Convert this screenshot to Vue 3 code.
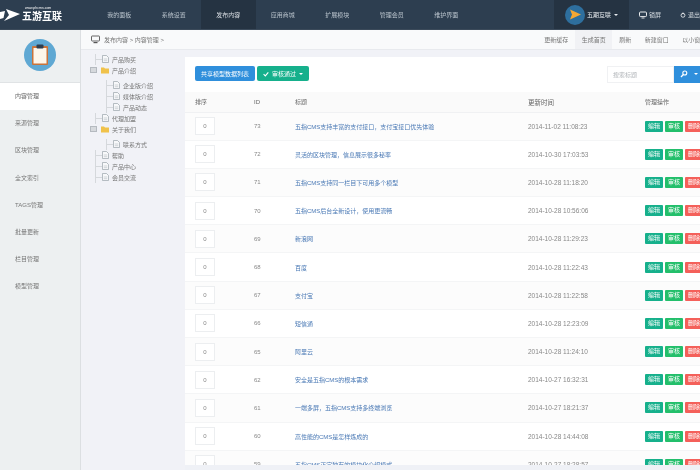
<template>
  <div class="page">
    <header class="topbar">
      <div class="logo">
        <svg width="21" height="15" viewBox="0 0 21 15">
          <path d="M0 5l5-1-1.500 7-3.500 1z" fill="#fff"/>
          <path d="M6 2l14 5-16 7 5-6z" fill="#fff"/>
        </svg>
        <div class="logo-text">
          <span class="logo-url">www.phcms.com</span>
          <span class="logo-name">五游互联</span>
        </div>
      </div>
      <nav class="nav">
        <a v-for="item in navItems" :key="item" class="nav-item" :class="{ active: item === '发布内容' }">{{ item }}</a>
      </nav>
      <div class="user">
        <span class="avatar">
          <svg width="13" height="11" viewBox="0 0 13 11">
            <path d="M1 0.500l11 5-11 5 2-5z" fill="#f5a833"/>
          </svg>
        </span>
        <span class="user-name">五期互联</span>
        <span class="caret"></span>
      </div>
      <div class="tool tool-lock">
        <svg width="8" height="8" viewBox="0 0 8 8" fill="none">
          <rect x="0.5" y="1" width="7" height="4.6" rx="1" stroke="#fff" stroke-width="0.9"/>
          <path d="M2.500 7h3" stroke="#fff" stroke-width="0.8"/>
        </svg>
        <span>锁屏</span>
      </div>
      <div class="tool tool-exit">
        <svg width="8" height="8" viewBox="0 0 8 8" fill="none">
          <circle cx="4" cy="4.400" r="2.600" stroke="#fff" stroke-width="1"/>
          <path d="M4 0.600v2.400" stroke="#fff" stroke-width="1"/>
        </svg>
        <span>退出</span>
      </div>
    </header>

    <div class="body">
      <aside class="sidebar">
        <div class="side-head">
          <span class="side-icon">
            <svg width="20" height="22" viewBox="0 0 20 22">
              <rect x="2" y="2" width="16" height="19" rx="1" fill="#c9733a"/>
              <rect x="3.500" y="4" width="13" height="15.500" fill="#fdf6ea"/>
              <rect x="6.500" y="0.500" width="7" height="4" rx="1" fill="#2d3e50"/>
            </svg>
          </span>
        </div>
        <a v-for="item in sideItems" :key="item" class="side-item" :class="{ active: item === '内容管理' }">{{ item }}</a>
      </aside>

      <main class="main">
        <div class="crumbs">
          <div class="crumb-left">
            <svg width="9" height="9" viewBox="0 0 9 9" fill="none">
              <rect x="0.500" y="1" width="8" height="5" rx="0.600" stroke="#555" stroke-width="0.900"/>
              <path d="M2.500 7.600h4" stroke="#555" stroke-width="1.200"/>
            </svg>
            <span>发布内容 &gt; 内容管理 &gt;</span>
          </div>
          <div class="crumb-right">
            <a v-for="link in crumbLinks" :key="link" :class="{ current: link === '生成首页' }">{{ link }}</a>
          </div>
        </div>

        <div class="work">
          <div class="tree">
            <div
              v-for="node in treeNodes"
              :key="node.label"
              class="tree-row"
              :class="['level-' + node.level, { folder: node.folder, first: node.first }]"
            >
              <span v-if="node.folder" class="expander"></span>
              <span v-else class="branch"></span>
              <svg v-if="node.folder" class="tree-icon" width="8" height="8" viewBox="0 0 8 8">
                <path d="M0 1.500h3l1 1h4v5h-8z" fill="#f0c24b"/>
              </svg>
              <svg v-else class="tree-icon" width="7" height="8" viewBox="0 0 7 8" fill="none">
                <path d="M0.500 0.500h4l2 2v5h-6z" fill="#f7f8fa" stroke="#9aa3ab" stroke-width="0.700"/>
                <path d="M1.800 4h3.400M1.800 5.700h3.400" stroke="#b5bcc2" stroke-width="0.600"/>
              </svg>
              <span class="tree-label">{{ node.label }}</span>
            </div>
          </div>

          <section class="panel">
            <div class="toolbar">
              <div class="buttons">
                <button class="btn btn-blue">共享模型数据列表</button>
                <button class="btn btn-green">
                  <svg width="6" height="6" viewBox="0 0 6 6" fill="none">
                    <path d="M0.600 3.200l1.700 1.700 3-3.600" stroke="#fff" stroke-width="1.100"/>
                  </svg>
                  审核通过
                  <span class="caret"></span>
                </button>
              </div>
              <div class="search">
                <span class="search-input">搜索标题</span>
                <span class="search-btn">
                  <svg width="8" height="8" viewBox="0 0 8 8" fill="none">
                    <circle cx="4.800" cy="3" r="2" stroke="#fff" stroke-width="1.100"/>
                    <path d="M3.400 4.400L1 7" stroke="#fff" stroke-width="1.300"/>
                  </svg>
                  <span class="caret"></span>
                </span>
              </div>
            </div>

            <table class="table">
              <thead>
                <tr>
                  <th class="col-sort">排序</th>
                  <th class="col-id">ID</th>
                  <th class="col-title">标题</th>
                  <th class="col-time">更新时间</th>
                  <th class="col-ops">管理操作</th>
                </tr>
              </thead>
              <tbody>
                <tr v-for="row in rows" :key="row.id">
                  <td class="col-sort"><span class="sort-box">0</span></td>
                  <td class="col-id">{{ row.id }}</td>
                  <td class="col-title"><a>{{ row.title }}</a></td>
                  <td class="col-time">{{ row.time }}</td>
                  <td class="col-ops">
                    <span class="tag tag-teal">编辑</span>
                    <span class="tag tag-green">审核</span>
                    <span class="tag tag-red">删除</span>
                  </td>
                </tr>
              </tbody>
            </table>
          </section>
        </div>
      </main>
    </div>
    <div class="bottom-strip"></div>
  </div>
</template>

<script setup>
const navItems = ['我的面板', '系统设置', '发布内容', '应用商城', '扩展模块', '管理会员', '维护界面']
const sideItems = ['内容管理', '来源管理', '区块管理', '全文索引', 'TAGS管理', '批量更新', '栏目管理', '模型管理']
const crumbLinks = ['更新缓存', '生成首页', '刷新', '新建窗口', '以小窗口']

const treeNodes = [
  { label: '产品购买', level: 0 },
  { label: '产品介绍', level: 0, folder: true },
  { label: '企业版介绍', level: 1, first: true },
  { label: '媒体版介绍', level: 1 },
  { label: '产品动态', level: 1 },
  { label: '代理加盟', level: 0 },
  { label: '关于我们', level: 0, folder: true },
  { label: '联系方式', level: 1, first: true },
  { label: '帮助', level: 0 },
  { label: '产品中心', level: 0 },
  { label: '会员交流', level: 0 }
]

const rows = [
  { id: 73, title: '五指CMS支持丰富的支付接口，支付宝接口优先体验', time: '2014-11-02 11:08:23' },
  { id: 72, title: '灵活的区块管理，信息展示很多秘率', time: '2014-10-30 17:03:53' },
  { id: 71, title: '五指CMS支持同一栏目下可用多个模型', time: '2014-10-28 11:18:20' },
  { id: 70, title: '五指CMS后台全新设计，使用更流畅', time: '2014-10-28 10:56:06' },
  { id: 69, title: '新浪网', time: '2014-10-28 11:29:23' },
  { id: 68, title: '百度', time: '2014-10-28 11:22:43' },
  { id: 67, title: '支付宝', time: '2014-10-28 11:22:58' },
  { id: 66, title: '短信通', time: '2014-10-28 12:23:09' },
  { id: 65, title: '阿里云', time: '2014-10-28 11:24:10' },
  { id: 62, title: '安全是五指CMS的根本需求', time: '2014-10-27 16:32:31' },
  { id: 61, title: '一端多屏，五指CMS支持多终端浏览', time: '2014-10-27 18:21:37' },
  { id: 60, title: '高性能的CMS是怎样炼成的', time: '2014-10-28 14:44:08' },
  { id: 59, title: '五指CMS正宗独有的模块化介绍模式', time: '2014-10-27 18:28:57' }
]
</script>

<style>
html, body {
  margin: 0;
  background: #eff0f5;
}
</style>

<style scoped>
.page {
  position: relative;
  width: 700px;
  height: 470px;
  overflow: hidden;
  display: flex;
  flex-direction: column;
  background: #f1f2f7;
  font-family: "Liberation Sans", "Noto Sans CJK SC", sans-serif;
  font-size: 6px;
  color: #777;
  filter: blur(0.35px);
}

.topbar {
  height: 30px;
  flex: none;
  display: flex;
  align-items: center;
  background: #2d3e50;
  color: #b9c3cc;
  border-bottom: 1px solid #3b4a5a;
  box-sizing: border-box;
}

.logo {
  width: 92px;
  flex: none;
  display: flex;
  align-items: center;
  gap: 1px;
  color: #fff;
}

.logo-text {
  display: flex;
  flex-direction: column;
  line-height: 1;
}

.logo-url {
  font-size: 3.500px;
  padding: 0 0 1px 3px;
}

.logo-name {
  font-size: 10px;
  font-weight: 700;
}

.nav {
  display: flex;
  height: 100%;
  flex: 1;
}

.nav-item {
  width: 54.500px;
  display: flex;
  align-items: center;
  justify-content: center;
}

.nav-item.active {
  background: #253342;
  color: #d8dde2;
}

.user {
  width: 75px;
  height: 100%;
  flex: none;
  display: flex;
  align-items: center;
  padding-left: 11px;
  box-sizing: border-box;
  background: #253342;
  color: #e8ecef;
}

.avatar {
  width: 20px;
  height: 20px;
  border-radius: 50%;
  background: #2e6f9e;
  display: flex;
  align-items: center;
  justify-content: center;
  margin-right: 2px;
}

.user-name {
  margin-right: 3px;
}

.caret {
  display: inline-block;
  width: 0;
  height: 0;
  border-left: 2px solid transparent;
  border-right: 2px solid transparent;
  border-top: 2px solid currentColor;
}

.tool {
  display: flex;
  align-items: center;
  gap: 2px;
  box-sizing: border-box;
  color: #d5dbe0;
  white-space: nowrap;
}

.tool-lock {
  width: 51px;
  padding-left: 10px;
}

.tool-exit {
  width: 20px;
}

.body {
  flex: 1;
  min-height: 0;
  display: flex;
}

.sidebar {
  width: 81px;
  flex: none;
  background: #edf0f1;
  border-right: 1px solid #dcdfe2;
  box-sizing: border-box;
}

.side-head {
  height: 53px;
  display: flex;
  align-items: center;
  justify-content: center;
  border-bottom: 1px solid #e0e3e5;
  box-sizing: border-box;
  padding-bottom: 3px;
}

.side-icon {
  width: 32px;
  height: 32px;
  border-radius: 50%;
  background: #5fa8d3;
  display: flex;
  align-items: center;
  justify-content: center;
}

.side-item {
  display: block;
  height: 27.200px;
  line-height: 27.200px;
  padding-left: 15px;
}

.side-item.active {
  background: #fff;
  color: #666;
}

.main {
  flex: 1;
  min-width: 0;
  display: flex;
  flex-direction: column;
}

.crumbs {
  height: 20px;
  flex: none;
  display: flex;
  align-items: center;
  justify-content: space-between;
  padding-left: 10px;
  background: #f9fafb;
  border-bottom: 1px solid #e8eaee;
  box-sizing: border-box;
  overflow: hidden;
}

.crumb-left {
  display: flex;
  align-items: center;
  gap: 4px;
}

.crumb-right {
  display: flex;
  height: 100%;
  margin-right: -13px;
}

.crumb-right a {
  display: flex;
  align-items: center;
  padding: 0 6.750px;
}

.crumb-right a.current {
  background: #f1f2f5;
}

.work {
  flex: 1;
  min-height: 0;
  display: flex;
  padding-top: 7px;
}

.tree {
  width: 104px;
  flex: none;
  margin-top: -3.500px;
  box-sizing: border-box;
}

.tree-row {
  display: flex;
  align-items: center;
  height: 11px;
  padding-left: 14px;
}

.tree-row.folder {
  padding-left: 9px;
}

.tree-row.level-1 {
  padding-left: 25px;
}

.tree-row.first {
  margin-top: 4px;
}

.expander {
  width: 7px;
  height: 6px;
  margin-right: 4px;
  background: #d6d9dd;
  border: 1px solid #b5bac0;
  box-sizing: border-box;
}

.branch {
  width: 7px;
  height: 100%;
  flex: none;
  box-sizing: border-box;
  border-left: 1px solid #d5d8dc;
  background: linear-gradient(#d5d8dc, #d5d8dc) left center / 100% 1px no-repeat;
}

.tree-icon {
  flex: none;
}

.tree-label {
  margin-left: 3px;
}

.panel {
  flex: 1;
  min-width: 0;
  background: #fff;
}

.toolbar {
  height: 35px;
  display: flex;
  align-items: center;
  justify-content: space-between;
  padding-left: 10px;
  box-sizing: border-box;
}

.buttons {
  display: flex;
  gap: 2px;
  margin-bottom: 2px;
}

.btn {
  height: 15px;
  border: none;
  border-radius: 2px;
  padding: 0;
  display: flex;
  align-items: center;
  justify-content: center;
  gap: 3px;
  color: #fff;
  font-family: inherit;
  font-size: 6px;
  white-space: nowrap;
}

.btn-blue {
  width: 60px;
  background: #2f8fdc;
}

.btn-green {
  width: 52px;
  background: #16b08c;
}

.search {
  display: flex;
  height: 17px;
  margin-bottom: 1px;
}

.search-input {
  width: 67px;
  padding-left: 5px;
  box-sizing: border-box;
  display: flex;
  align-items: center;
  border: 1px solid #f0f1f3;
  color: #b0b4b8;
}

.search-btn {
  width: 26px;
  display: flex;
  align-items: center;
  gap: 6px;
  padding-left: 6px;
  box-sizing: border-box;
  background: #2f8fdc;
  color: #fff;
}

.table {
  width: 515px;
  border-collapse: collapse;
  table-layout: fixed;
}

.table th {
  height: 20px;
  box-sizing: border-box;
  padding: 0;
  text-align: left;
  font-weight: 400;
  background: #fafafa;
  color: #666;
  border-bottom: 1px solid #f0f1f3;
}

.table td {
  height: 28.200px;
  box-sizing: border-box;
  padding: 0;
  border-bottom: 1px solid #f4f5f6;
  color: #888;
}

.table tbody tr:nth-child(odd) td {
  background: #fcfcfc;
}

.col-sort {
  width: 69px;
  box-sizing: border-box;
  padding-left: 10px !important;
}

.col-id {
  width: 41px;
}

.col-title {
  width: 233px;
}

.col-time {
  width: 117px;
  font-size: 6.500px;
}

.col-title a {
  color: #4a79b5;
}

.sort-box {
  width: 20px;
  height: 18px;
  display: flex;
  align-items: center;
  justify-content: center;
  border: 1px solid #eceef0;
  box-sizing: border-box;
  background: #fff;
}

.col-ops {
  white-space: nowrap;
}

.tag {
  display: inline-block;
  width: 18px;
  height: 11px;
  line-height: 11px;
  margin-right: 2px;
  border-radius: 1px;
  text-align: center;
  color: #fff;
  font-size: 6px;
}

.tag-teal {
  background: #16b08c;
}

.tag-green {
  background: #23bf6b;
}

.tag-red {
  background: #f4605a;
}

.bottom-strip {
  position: absolute;
  left: 185px;
  right: 0;
  bottom: 0;
  height: 5px;
  background: #eff1f6;
}
</style>
